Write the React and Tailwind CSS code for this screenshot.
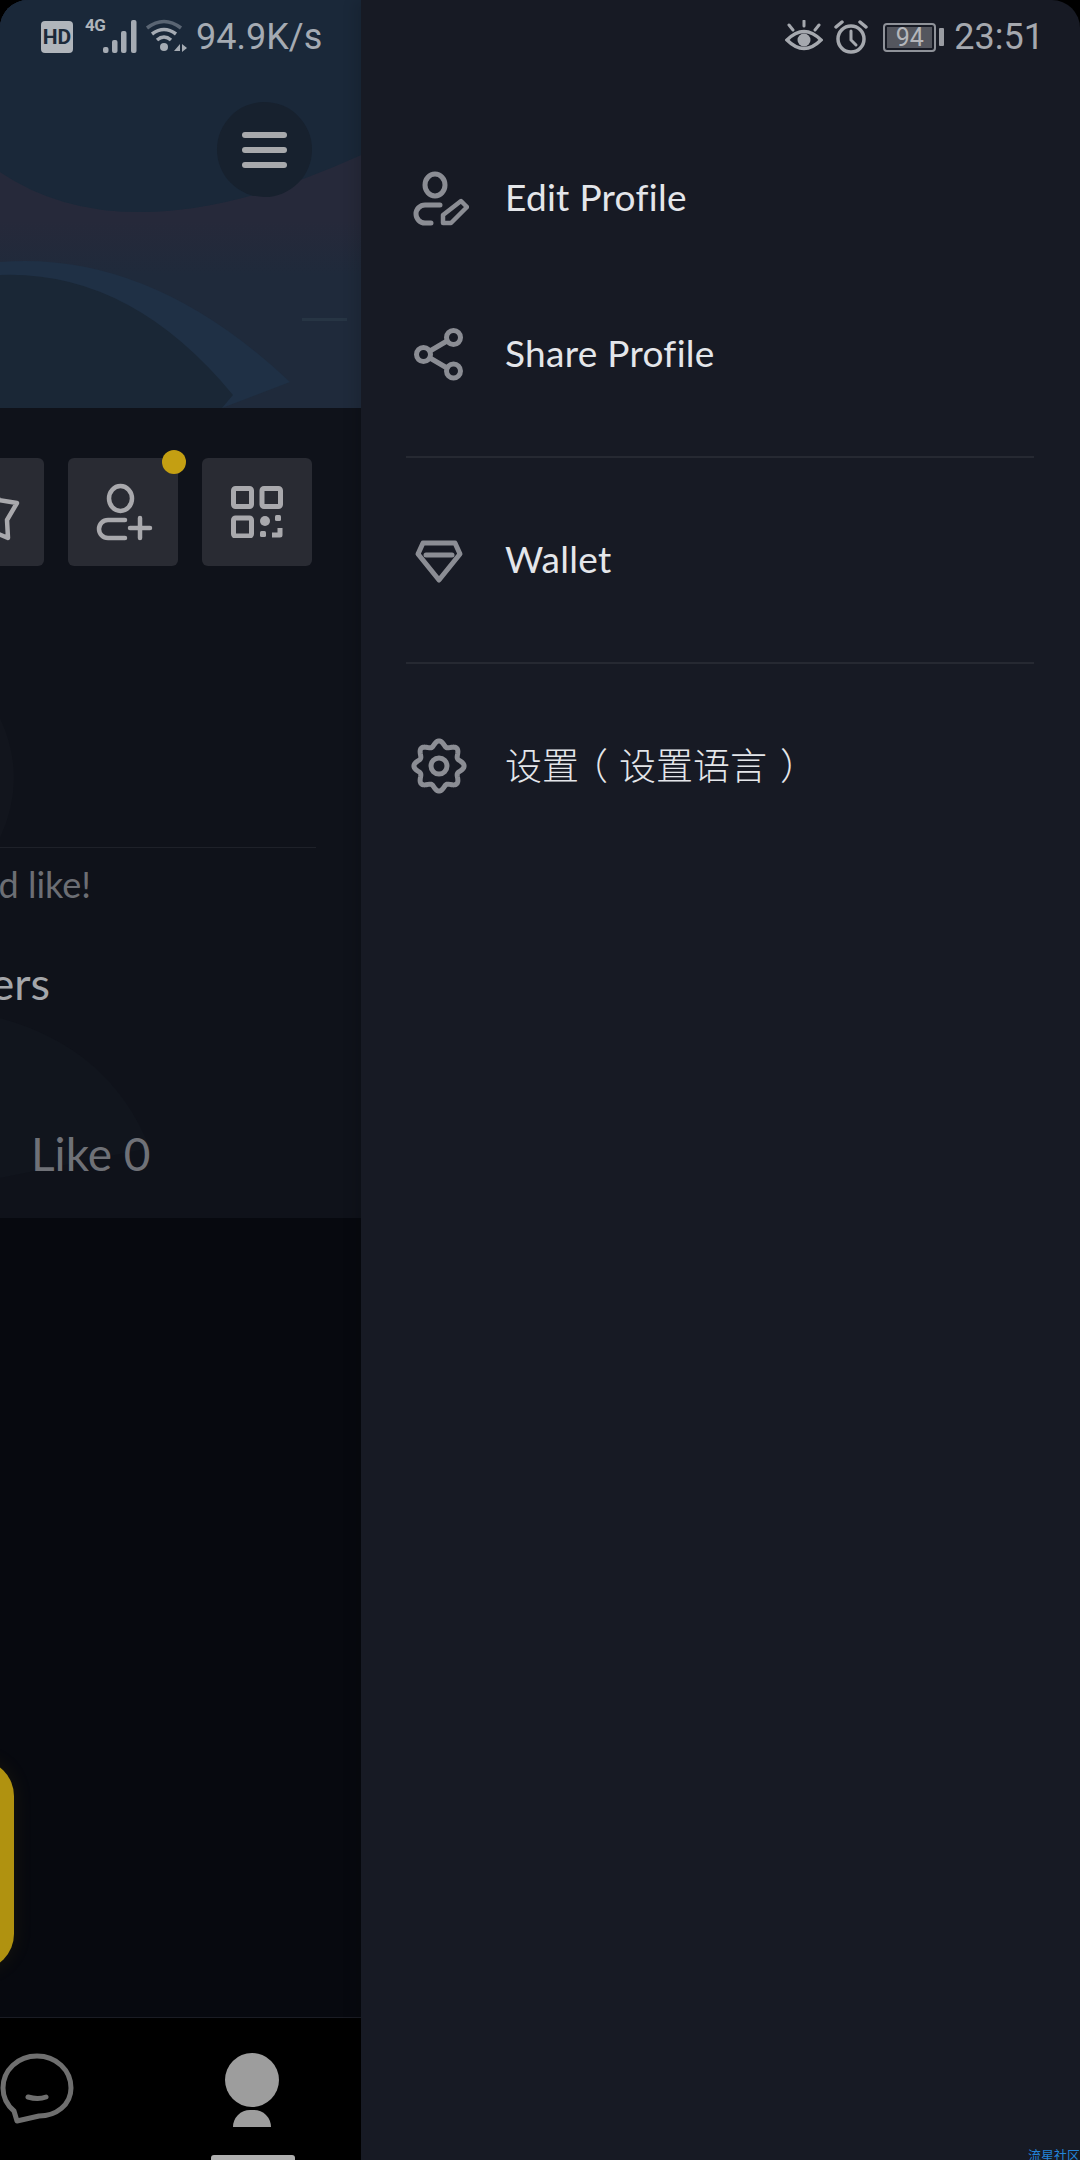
import React from "react";

// gear outline: 8 soft lobes round a circle
const gearPoints = Array.from({ length: 180 }, (_, i) => {
  const a = (i / 180) * Math.PI * 2;
  const r = 22.5 + 2.6 * Math.cos(8 * a);
  return `${(30 + r * Math.sin(a)).toFixed(2)},${(30 - r * Math.cos(a)).toFixed(2)}`;
}).join(" ");

function IconBox({ children }) {
  return (
    <svg width="60" height="60" viewBox="0 0 60 60" fill="none" stroke="#8b8d94" strokeWidth="5" strokeLinecap="round" strokeLinejoin="round">
      {children}
    </svg>
  );
}

function MenuRow({ icon, label, cjk }) {
  return (
    <div className="flex h-[156px] items-center">
      <div className="flex w-[66px] justify-center">{icon}</div>
      <span className={`mb-[2px] ml-[33px] text-[#e4e6ea] ${cjk ? "font-['Noto_Sans_CJK_SC',sans-serif] text-[37px] font-light [text-spacing-trim:space-all]" : "font-['Lato',sans-serif] text-[37px] tracking-[0.3px] [font-variant-ligatures:none]"}`}>
        {label}
      </span>
    </div>
  );
}

function LeftStatus() {
  return (
    <div className="relative flex h-[74px] items-center pl-[41px] font-['Roboto',sans-serif] text-[#a5abb3]">
      <div className="flex h-[32px] w-[32px] items-center justify-center rounded-[4px] bg-[#b0b5bb] text-[21px] font-bold leading-none text-[#1c2a3a]">HD</div>
      <div className="relative ml-[12px] h-[36px] w-[54px]">
        <span className="absolute left-0 top-[-3px] text-[17px] font-bold leading-[18px] tracking-[-0.5px] text-[#b0b5bb]">4G</span>
        <svg className="absolute left-0 top-0" width="54" height="36" viewBox="0 0 54 36" fill="#a5abb3">
          <rect x="18" y="28" width="5.5" height="6" rx="2" />
          <rect x="27" y="21" width="5.5" height="13" rx="2" />
          <rect x="36" y="12" width="5.5" height="22" rx="2" />
          <rect x="46" y="1" width="5.5" height="33" rx="2" />
        </svg>
      </div>
      <svg className="ml-[5px]" width="44" height="36" viewBox="0 0 44 36" fill="none" stroke="#a5abb3" strokeWidth="3.5">
        <path d="M3 9 Q20 -4 37 9" stroke="#5a6573" />
        <path d="M8 15 Q20 6 32 15" />
        <path d="M13 21 Q20 15 27 21" />
        <circle cx="20" cy="28" r="4" fill="#a5abb3" stroke="none" />
        <path d="M30 32 L36 25 V32 Z M38 25 L43 29 L38 33 Z" fill="#a5abb3" stroke="none" />
      </svg>
      <span className="ml-[8px] text-[36px] leading-none">94.9K/s</span>
    </div>
  );
}

function RightStatus() {
  return (
    <div className="flex h-[74px] items-center justify-end pr-[36px] font-['Roboto',sans-serif] text-[#a5a8ae]">
      <svg width="38" height="34" viewBox="0 0 38 34" fill="none" stroke="#a5a8ae" strokeWidth="3.5" strokeLinecap="round">
        <path d="M2 20 Q19 3 36 20 Q19 37 2 20 Z" />
        <circle cx="19" cy="20" r="6.5" fill="#a5a8ae" stroke="none" />
        <path d="M4 5 L8 10 M19 1 V6 M34 5 L30 10" strokeWidth="3" />
      </svg>
      <svg className="ml-[10px]" width="36" height="34" viewBox="0 0 36 34" fill="none" stroke="#a5a8ae" strokeWidth="3.5" strokeLinecap="round">
        <circle cx="18" cy="19" r="13" />
        <path d="M18 11 V20 L23 25" strokeWidth="3" />
        <path d="M3 7 L9 2 M33 7 L27 2" />
      </svg>
      <div className="relative ml-[14px] flex h-[29px] w-[53px] items-center justify-center rounded-[4px] border-2 border-[#8f9299]">
        <div className="flex h-[21px] w-[45px] items-center justify-center bg-[#54565e] text-[25px] leading-none text-[#b4b6bb]">94</div>
      </div>
      <div className="ml-[3px] h-[18px] w-[5px] rounded-[1px] bg-[#9a9ca2]" />
      <span className="ml-[10px] text-[36px] leading-none">23:51</span>
    </div>
  );
}

function Header() {
  return (
    <div className="relative h-[408px] overflow-hidden bg-[#1f2a3b]">
      {/* wave artwork behind the header */}
      <svg className="absolute inset-0" width="361" height="408" viewBox="0 0 361 408">
        <defs>
          <linearGradient id="band" x1="0" y1="0" x2="0" y2="1">
            <stop offset="0.55" stopColor="#26293a" />
            <stop offset="1" stopColor="#1f2a3b" />
          </linearGradient>
        </defs>
        <rect width="361" height="408" fill="#1f2a3b" />
        <path d="M0 172 Q130 260 361 155 V275 H0 Z" fill="url(#band)" />
        <path d="M0 0 H361 V155 Q130 260 0 172 Z" fill="#1a2839" />
        <path d="M0 262 Q150 250 290 382 L222 408 H0 Z" fill="#1f3045" />
        <path d="M0 275 Q130 270 233 395 L222 408 H0 Z" fill="#1a2736" />
        <rect x="302" y="318" width="45" height="3" fill="#273544" />
      </svg>
      <div className="relative">
        <LeftStatus />
        <div className="mt-[28px] flex justify-end pr-[49px]">
          <div className="flex h-[95px] w-[95px] flex-col items-center justify-center gap-[9px] rounded-full bg-[#17212e]">
            <div className="h-[6px] w-[45px] rounded-full bg-[#a7a9ac]" />
            <div className="h-[6px] w-[45px] rounded-full bg-[#a7a9ac]" />
            <div className="h-[6px] w-[45px] rounded-full bg-[#a7a9ac]" />
          </div>
        </div>
      </div>
    </div>
  );
}

function ProfileSection() {
  return (
    <div className="relative h-[810px] overflow-hidden bg-[#0f121a] font-['Lato',sans-serif]">
      {/* faint shapes behind the card */}
      <svg className="absolute inset-0" width="361" height="810" viewBox="0 0 361 810">
        <path d="M0 310 Q28 370 0 430 Z" fill="#12151d" />
        <path d="M0 610 Q110 640 150 740 L0 770 Z" fill="#11151d" />
      </svg>
      <div className="relative">
        <div className="flex justify-end gap-[24px] pr-[49px] pt-[50px]">
          <div className="flex h-[108px] w-[110px] shrink-0 items-center justify-center rounded-[6px] bg-[#292b33]">
            <svg width="110" height="108" viewBox="0 0 110 108" fill="none" stroke="#a9a9ad" strokeWidth="4.5" strokeLinejoin="round">
              <path d="M55 22 L65 42 L83 45 L73 62 L74 80 L55 72 L36 80 L37 62 L27 45 L45 42 Z" />
            </svg>
          </div>
          <div className="relative flex h-[108px] w-[110px] shrink-0 items-center justify-center rounded-[6px] bg-[#292b33]">
            <svg width="64" height="64" viewBox="0 0 64 64" fill="none" stroke="#a9a9ad" strokeWidth="4.5" strokeLinecap="round">
              <ellipse cx="29.5" cy="18.5" rx="11.5" ry="12.5" />
              <path d="M34 40 H17 a9 9 0 0 0 0 18 H34" />
              <path d="M39 48 H59 M49 38 V58" />
            </svg>
            <div className="absolute right-[-8px] top-[-8px] h-[24px] w-[24px] rounded-full bg-[#c49f12]" />
          </div>
          <div className="flex h-[108px] w-[110px] shrink-0 items-center justify-center rounded-[6px] bg-[#292b33]">
            <svg width="52" height="52" viewBox="0 0 52 52" fill="none" stroke="#a9a9ad" strokeWidth="5" strokeLinejoin="round">
              <rect x="2.5" y="2.5" width="18" height="18" rx="2" />
              <rect x="31" y="2.5" width="18.5" height="18" rx="2" />
              <rect x="2.5" y="32" width="18" height="18" rx="2" />
              <circle cx="34" cy="35" r="5" fill="#a9a9ad" stroke="none" />
              <rect x="44" y="29" width="6" height="6" rx="1.5" fill="#a9a9ad" stroke="none" />
              <rect x="29" y="45" width="6" height="6" rx="1.5" fill="#a9a9ad" stroke="none" />
              <path d="M41 49 H49 V42" fill="none" />
            </svg>
          </div>
        </div>
        <div className="mt-[281px] h-px w-[316px] bg-[#1e2129]" />
        <div className="mt-[16px] flex justify-end whitespace-nowrap pr-[270px] text-[36px] leading-[40px] text-[#6c6e74]">d like!</div>
        <div className="mt-[55px] flex justify-end whitespace-nowrap pr-[311px] text-[45px] leading-[48px] text-[#a4a6aa]">ers</div>
        <div className="mt-[123px] whitespace-nowrap pl-[31px] text-[46px] leading-[48px] text-[#6f7177]">Like 0</div>
      </div>
    </div>
  );
}

function BottomNav() {
  return (
    <div className="flex h-[143px] flex-col border-t border-[#1a1c24] bg-black">
      <div className="flex items-start pt-[35px]">
        <svg width="74" height="72" viewBox="0 0 74 72" fill="none" stroke="#6f6f6f" strokeWidth="5" strokeLinecap="round" strokeLinejoin="round">
          <path d="M37 3 C56 3 71 17 71 35 C71 52 56 63 39 63 L17 68 L14 58 C7 52 3 44 3 35 C3 17 18 3 37 3 Z" />
          <path d="M28 44 Q38 47 46 44" strokeWidth="5" />
        </svg>
        <div className="ml-[150px] flex w-[56px] flex-col items-center">
          <div className="h-[54px] w-[54px] rounded-full bg-[#9d9d9d]" />
          <div className="mt-[3px] h-[17px] w-[38px] rounded-t-full rounded-b-[2px] bg-[#9d9d9d]" />
        </div>
      </div>
      <div className="ml-[211px] mt-auto h-[5px] w-[84px] rounded-t-[3px] bg-[#b0b0b0]" />
    </div>
  );
}

export default function App() {
  return (
    <div className="relative flex h-[2160px] w-[1080px] overflow-hidden bg-black">
      <div className="flex w-[361px] shrink-0 flex-col overflow-hidden rounded-tl-[28px] bg-[#07090f]">
        <Header />
        <ProfileSection />
        <div className="h-[799px] overflow-hidden pt-[542px]">
          <div className="ml-[-200px] h-[210px] w-[214px] rounded-[36px] bg-[#b09210] shadow-[0_0_20px_rgba(176,146,16,0.1)]" />
        </div>
        <BottomNav />
      </div>

      <div className="relative flex-1 rounded-tr-[28px] bg-[#171a24] pl-[45px] pr-[46px] shadow-[-6px_0_14px_rgba(0,0,0,0.12)]">
        <div className="ml-[-45px] mr-[-46px]">
          <RightStatus />
        </div>
        <div className="pt-[46px]">
          <MenuRow
            label="Edit Profile"
            icon={
              <IconBox>
                <ellipse cx="26" cy="17" rx="10" ry="11" />
                <path d="M31 37 H16 a9 9 0 0 0 0 18 H22" />
                <path d="M52 33 L58 39 L42 55 H34 V47 Z" strokeWidth="4.5" />
              </IconBox>
            }
          />
          <MenuRow
            label="Share Profile"
            icon={
              <IconBox>
                <circle cx="44.5" cy="13.5" r="7" />
                <circle cx="14.5" cy="30.5" r="7" />
                <circle cx="44.5" cy="47" r="7" />
                <path d="M21 27 L38 17 M21 34 L38 44" />
              </IconBox>
            }
          />
          <div className="my-6 h-[2px] bg-[#262932]" />
          <MenuRow
            label="Wallet"
            icon={
              <IconBox>
                <path d="M14 13 H46 L51 24 L30 50 L9 24 Z" />
                <path d="M17 25 H43" />
              </IconBox>
            }
          />
          <div className="my-6 h-[2px] bg-[#262932]" />
          <MenuRow
            cjk
            label={
              <>
                设置<span className="ml-[-8px] mr-[11px]">（</span>设置语言<span className="ml-[13px]">）</span>
              </>
            }
            icon={
              <IconBox>
                <polygon points={gearPoints} />
                <circle cx="30" cy="30" r="8" />
              </IconBox>
            }
          />
        </div>
      </div>

      <span className="absolute bottom-[-3px] right-0 font-['Noto_Sans_CJK_SC',sans-serif] text-[13px] leading-[16px] text-[#2383d8]">流星社区</span>
    </div>
  );
}
